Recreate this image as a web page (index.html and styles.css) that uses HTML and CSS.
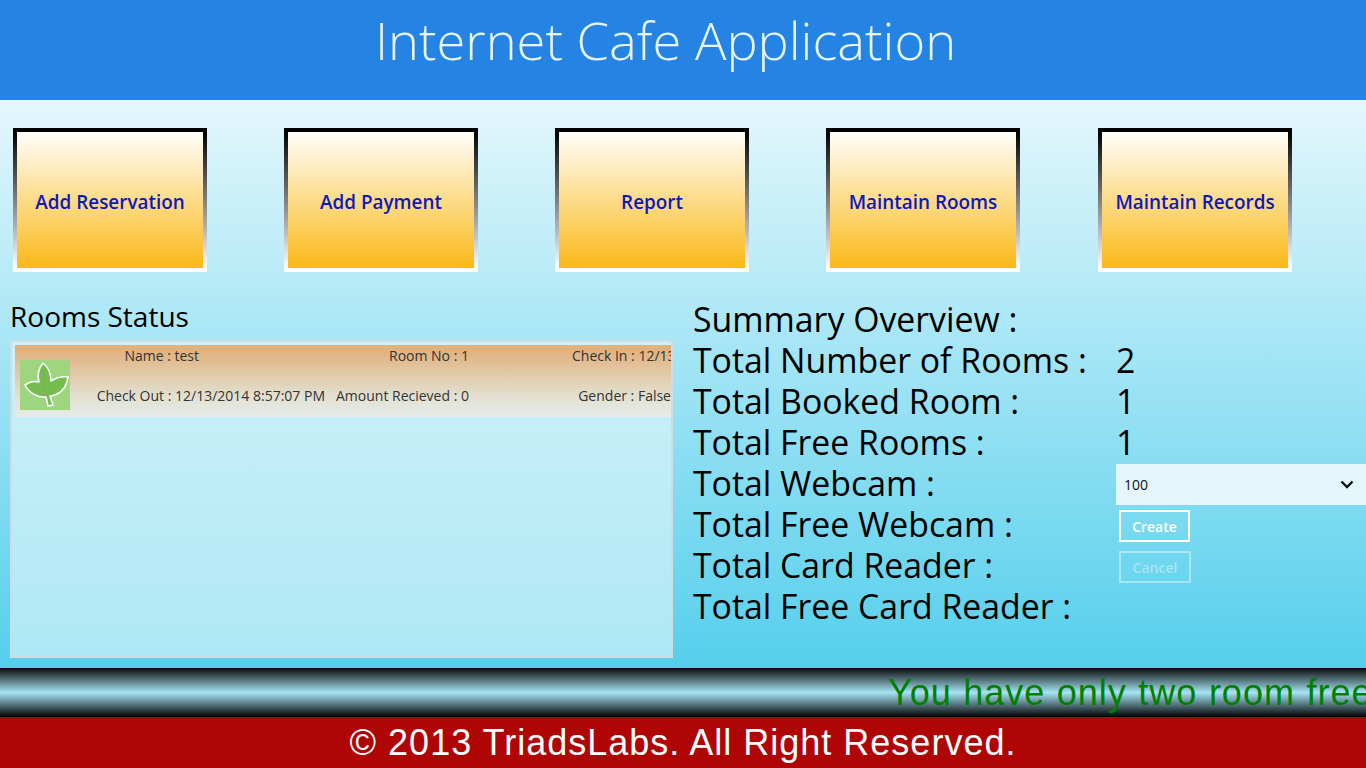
FILE: index.html
```html
<!DOCTYPE html>
<html lang="en">
<head>
<meta charset="utf-8">
<title>Internet Cafe Application</title>
<link rel="stylesheet" href="styles.css">
</head>
<body>
<header class="app-header"><h1>Internet Cafe Application</h1></header>
<main class="main">
  <nav class="actions">
    <button class="tile">Add Reservation</button>
    <button class="tile">Add Payment</button>
    <button class="tile">Report</button>
    <button class="tile">Maintain Rooms</button>
    <button class="tile last">Maintain Records</button>
  </nav>
  <div class="content">
    <section class="rooms">
      <h2>Rooms Status</h2>
      <div class="rooms-panel">
        <div class="room-row">
          <div class="thumb">
            <svg viewBox="0 0 50 50" width="50" height="50" aria-hidden="true">
              <path d="M23 3 C28 7 31 14 31 21 C36 18 42 16 48 17 C47 25 43 31 37 34 C35 35 32 36 30 36 L33 45 L28 46 L26 37 C18 38 9 33 5 25 C9 22 15 21 19 22 C17 15 19 8 23 3 Z" fill="#72bf4c" stroke="#fff" stroke-width="1.6" stroke-linejoin="round"/>
              <path d="M23 10 C22 19 24 28 27 36 M11 26 C16 31 22 34 27 36 M42 21 C38 27 33 32 27 36" fill="none" stroke="#86a872" stroke-width="1"/>
            </svg>
          </div>
          <span class="cell name">Name : test</span>
          <span class="cell room-no">Room No : 1</span>
          <span class="cell check-in">Check In : 12/13/2014 8:57:07 PM</span>
          <span class="cell check-out">Check Out : 12/13/2014 8:57:07 PM</span>
          <span class="cell amount">Amount Recieved : 0</span>
          <span class="cell gender">Gender : False</span>
        </div>
      </div>
    </section>
    <section class="summary">
      <div class="label">Summary Overview :</div><div></div>
      <div class="label">Total Number of Rooms :</div><div class="label">2</div>
      <div class="label">Total Booked Room :</div><div class="label">1</div>
      <div class="label">Total Free Rooms :</div><div class="label">1</div>
      <div class="label">Total Webcam :</div>
      <div class="select"><span>100</span>
        <svg viewBox="0 0 14 9" width="14" height="9" aria-hidden="true"><path d="M1.5 1.5 L7 7 L12.5 1.5" fill="none" stroke="#111" stroke-width="2.4"/></svg>
      </div>
      <div class="label">Total Free Webcam :</div><div class="btn-cell"><button class="btn">Create</button></div>
      <div class="label">Total Card Reader :</div><div class="btn-cell"><button class="btn disabled">Cancel</button></div>
      <div class="label">Total Free Card Reader :</div><div></div>
    </section>
  </div>
</main>
<div class="ticker"><span>You have only two room free</span></div>
<footer class="copyright">© 2013 TriadsLabs. All Right Reserved.</footer>
</body>
</html>
```
FILE: styles.css
```css
* { box-sizing: border-box; }
html, body { margin: 0; padding: 0; }
body {
  width: 1366px;
  height: 768px;
  overflow: hidden;
  display: flex;
  flex-direction: column;
  font-family: "Open Sans", "Noto Sans", sans-serif;
  color: #000;
}
.app-header {
  height: 100px;
  background: #2583e3;
  display: flex;
  align-items: center;
  justify-content: center;
  flex: none;
  padding: 0 35px 20px 0;
}
.app-header h1 {
  margin: 0;
  font-size: 52.4px;
  font-weight: 300;
  color: #e6f4fd;
  line-height: 80px;
}
.main {
  height: 568px;
  flex: none;
  background: linear-gradient(#e4f7fc, #55cfec);
  display: flex;
  flex-direction: column;
  padding: 28px 0 0 10px;
}
.actions {
  display: flex;
  gap: 77px;
  padding-left: 3px;
}
.tile {
  width: 194px;
  height: 144px;
  border: 4px solid;
  border-image: linear-gradient(#000, #fff) 1;
  background: linear-gradient(#fffefb, #fab917);
  color: #0b18c0;
  font: 600 18.9px "Open Sans", sans-serif;
  padding: 4px 0 0;
}
.tile.last { margin-left: 1px; }
.content {
  display: flex;
  margin-top: 27px;
}
.rooms { width: 663px; }
.rooms h2 {
  margin: 0;
  font-size: 28px;
  font-weight: 400;
  line-height: 34px;
  height: 41px;
}
.rooms-panel {
  height: 318px;
  border: 2px solid #cfdde2;
  padding: 3px 0 0 3px;
  background: linear-gradient(#ccf1f9, #aee8f5);
  overflow: hidden;
}
.room-row {
  width: 658px;
  height: 72px;
  background: linear-gradient(#e1b27f 8%, #e2dfcf 70%, #e6ecea);
  display: grid;
  grid-template-columns: 80px 230px 144px 202px;
  grid-template-rows: 36px 36px;
  color: #333;
  font-size: 14px;
  white-space: nowrap;
}
.thumb {
  grid-row: 1 / 3;
  width: 50px;
  height: 50px;
  margin: 15px 0 0 5px;
  background: #9ed57f;
}
.thumb svg { display: block; }
.cell { line-height: 22px; text-align: right; }
.name { grid-column: 2; grid-row: 1; padding-right: 126px; }
.room-no { grid-column: 3; grid-row: 1; }
.check-in { grid-column: 4; grid-row: 1; text-align: left; padding-left: 103px; overflow: hidden; }
.check-out { grid-column: 2; grid-row: 2; padding-top: 4px; }
.amount { grid-column: 3; grid-row: 2; padding-top: 4px; }
.gender { grid-column: 4; grid-row: 2; padding-top: 4px; }
.summary {
  margin-left: 20px;
  flex: 1;
  display: grid;
  grid-template-columns: 423px 250px;
  grid-auto-rows: 41px;
}
.label {
  font-size: 33.8px;
  line-height: 41px;
  white-space: nowrap;
}
.select {
  background: #e5f6fb;
  display: flex;
  align-items: center;
  justify-content: space-between;
  margin: 1px 0 -1px;
  padding: 0 12px 0 8px;
  font-size: 14px;
  color: #111;
}
.btn-cell { padding: 6px 0 0 3px; }
.btn {
  width: 71px;
  height: 32px;
  display: block;
  border: 2px solid #fff;
  background: transparent;
  color: #fff;
  font: 600 14px "Open Sans", sans-serif;
  padding: 0;
}
.btn.disabled {
  width: 72px;
  border-color: rgba(255,255,255,.4);
  color: rgba(255,255,255,.4);
}
.ticker {
  height: 49px;
  flex: none;
  background: linear-gradient(#0a0a0a, #a6e4f4 50%, #000);
  overflow: hidden;
  padding-left: 888px;
  white-space: nowrap;
  font: 36px/49px "Liberation Sans", Arial, sans-serif;
  letter-spacing: 1px;
  word-spacing: 0.5px;
  color: #008000;
}
.copyright {
  height: 51px;
  flex: none;
  background: #b00505;
  color: #fff;
  text-align: center;
  font: 36px/51px "Liberation Sans", Arial, sans-serif;
  letter-spacing: 1px;
}
```
